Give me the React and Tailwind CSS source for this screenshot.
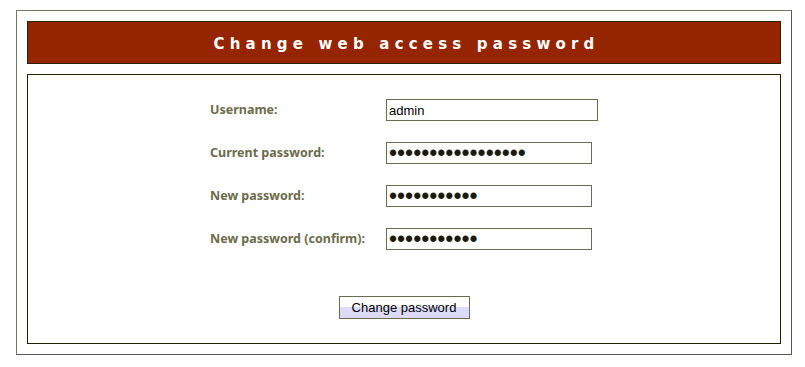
import React from "react";

const rows = [
  { label: "Username:", type: "text", value: "admin", w: "w-[212px]" },
  { label: "Current password:", type: "password", value: "aaaaaaaaaaaaaaaaa", w: "w-[206px]" },
  { label: "New password:", type: "password", value: "aaaaaaaaaaa", w: "w-[206px]" },
  { label: "New password (confirm):", type: "password", value: "aaaaaaaaaaa", w: "w-[206px]" },
];

export default function App() {
  return (
    <div className="bg-white w-[805px] h-[367px] pt-[10px] pl-[16px]">
      <div className="w-[776px] h-[345px] border border-t-[#77775f] border-l-[#77775f] border-r-[#555566] border-b-[#555566] p-[10px] flex flex-col gap-[10px]">
        <div className="h-[43px] bg-[#952500] border border-[#2a2200] flex items-center justify-center pt-[3px]">
          <h1 className="text-white font-bold text-[15px] tracking-[5.2px] pl-[5px] font-['DejaVu_Sans',sans-serif]">
            Change web access password
          </h1>
        </div>
        <div className="flex-1 border border-[#222200] pt-[24px]">
          <div className="w-[388px] mx-auto flex flex-col gap-[21px]">
            {rows.map((r) => (
              <div key={r.label} className="flex items-center h-[22px]">
                <label className="w-[176px] text-[12.5px] font-bold text-[#6b6b4b] font-['Noto_Sans',sans-serif] pt-[1px]">
                  {r.label}
                </label>
                <input
                  type={r.type}
                  defaultValue={r.value}
                  readOnly
                  className={`${r.w} h-[22px] border border-[#6b6b50] px-[2px] ${
                    r.type === "password" ? "text-[23px] text-[#1a1a0a] leading-none" : "text-[13px] text-black"
                  } font-['Liberation_Sans',sans-serif] outline-none`}
                />
              </div>
            ))}
          </div>
          <div className="flex justify-center mt-[46px]">
            <button className="w-[131px] h-[23px] border border-[#6b6b50] bg-[linear-gradient(#ffffff_50%,#dcdcfa_50%)] text-[13px] text-black font-['Liberation_Sans',sans-serif] leading-none">
              Change password
            </button>
          </div>
        </div>
      </div>
    </div>
  );
}
